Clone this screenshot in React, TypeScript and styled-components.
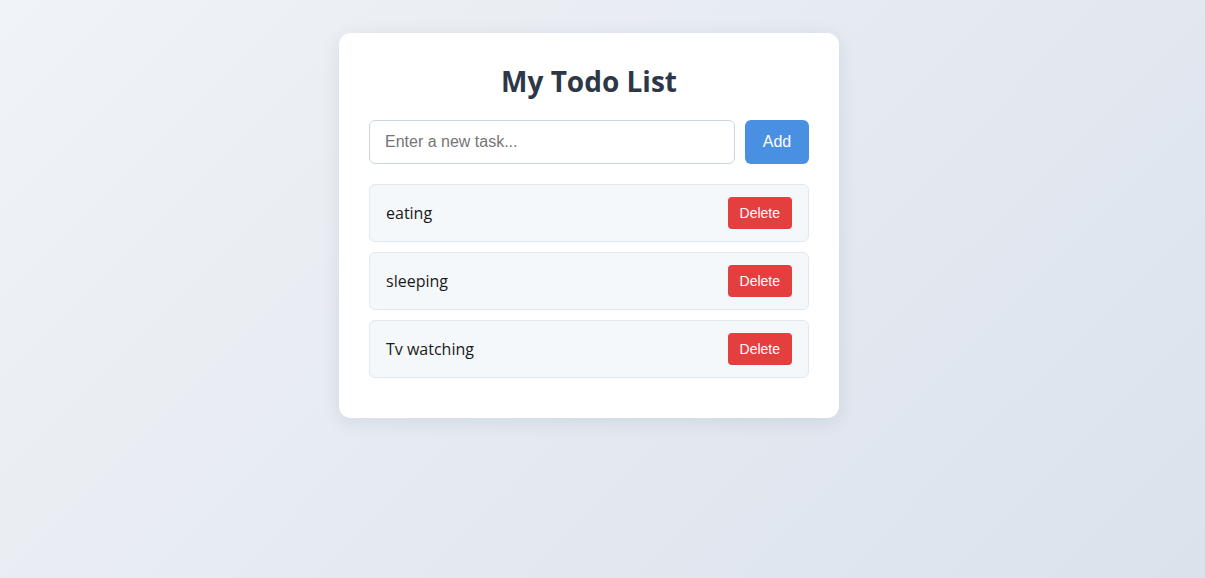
import React, { FC, useState } from "react";
import styled, { createGlobalStyle } from "styled-components";

const GlobalStyle = createGlobalStyle`
  html, body {
    margin: 0;
    padding: 0;
  }
  body {
    font-family: "Open Sans", "Noto Sans", sans-serif;
    background: linear-gradient(135deg, #f0f3f7 0%, #dbe2ec 100%);
    min-height: 100vh;
  }
`;

const Page = styled.div`
  display: flex;
  justify-content: center;
  padding: 33px 27px 0 0;
  min-height: 100vh;
  box-sizing: border-box;
`;

const Card = styled.div`
  width: 500px;
  box-sizing: border-box;
  background: #ffffff;
  border-radius: 12px;
  padding: 30px;
  box-shadow: 0 4px 18px rgba(30, 45, 70, 0.1);
  align-self: flex-start;
`;

const Title = styled.h1`
  margin: 0 0 20px;
  height: 37px;
  line-height: 37px;
  text-align: center;
  font-size: 28px;
  font-weight: 700;
  color: #2d3748;
`;

const InputRow = styled.div`
  display: flex;
  gap: 10px;
  margin-bottom: 20px;
`;

const TaskInput = styled.input`
  flex: 1;
  height: 44px;
  box-sizing: border-box;
  padding: 0 15px;
  border: 1px solid #cbd5e0;
  border-radius: 6px;
  font-family: "Liberation Sans", Arial, sans-serif;
  font-size: 16px;
  color: #2d3748;
  outline: none;

  &::placeholder {
    color: #757575;
  }
`;

const AddButton = styled.button`
  width: 64px;
  height: 44px;
  border: none;
  border-radius: 6px;
  background: #4a90e2;
  color: #ffffff;
  font-family: "Liberation Sans", Arial, sans-serif;
  font-size: 16px;
  cursor: pointer;
`;

const List = styled.ul`
  list-style: none;
  margin: 0;
  padding: 0;
`;

const Item = styled.li`
  display: flex;
  align-items: center;
  justify-content: space-between;
  padding: 12px 16px;
  margin-bottom: 10px;
  background: #f5f8fb;
  border: 1px solid #e2e8f0;
  border-radius: 6px;
`;

const ItemText = styled.span`
  font-size: 16px;
  color: #1a1a1a;
`;

const DeleteButton = styled.button`
  height: 32px;
  padding: 0 12px;
  border: none;
  border-radius: 4px;
  background: #e53e3e;
  color: #ffffff;
  font-family: "Liberation Sans", Arial, sans-serif;
  font-size: 14px;
  cursor: pointer;
`;

const App: FC = () => {
  const [todos, setTodos] = useState<string[]>(["eating", "sleeping", "Tv watching"]);
  const [text, setText] = useState("");

  const addTodo = () => {
    if (!text.trim()) return;
    setTodos([...todos, text.trim()]);
    setText("");
  };

  return (
    <>
      <GlobalStyle />
      <Page>
        <Card>
          <Title>My Todo List</Title>
          <InputRow>
            <TaskInput
              placeholder="Enter a new task..."
              value={text}
              onChange={(e) => setText(e.target.value)}
            />
            <AddButton onClick={addTodo}>Add</AddButton>
          </InputRow>
          <List>
            {todos.map((todo, i) => (
              <Item key={i}>
                <ItemText>{todo}</ItemText>
                <DeleteButton onClick={() => setTodos(todos.filter((_, j) => j !== i))}>
                  Delete
                </DeleteButton>
              </Item>
            ))}
          </List>
        </Card>
      </Page>
    </>
  );
};

export default App;
